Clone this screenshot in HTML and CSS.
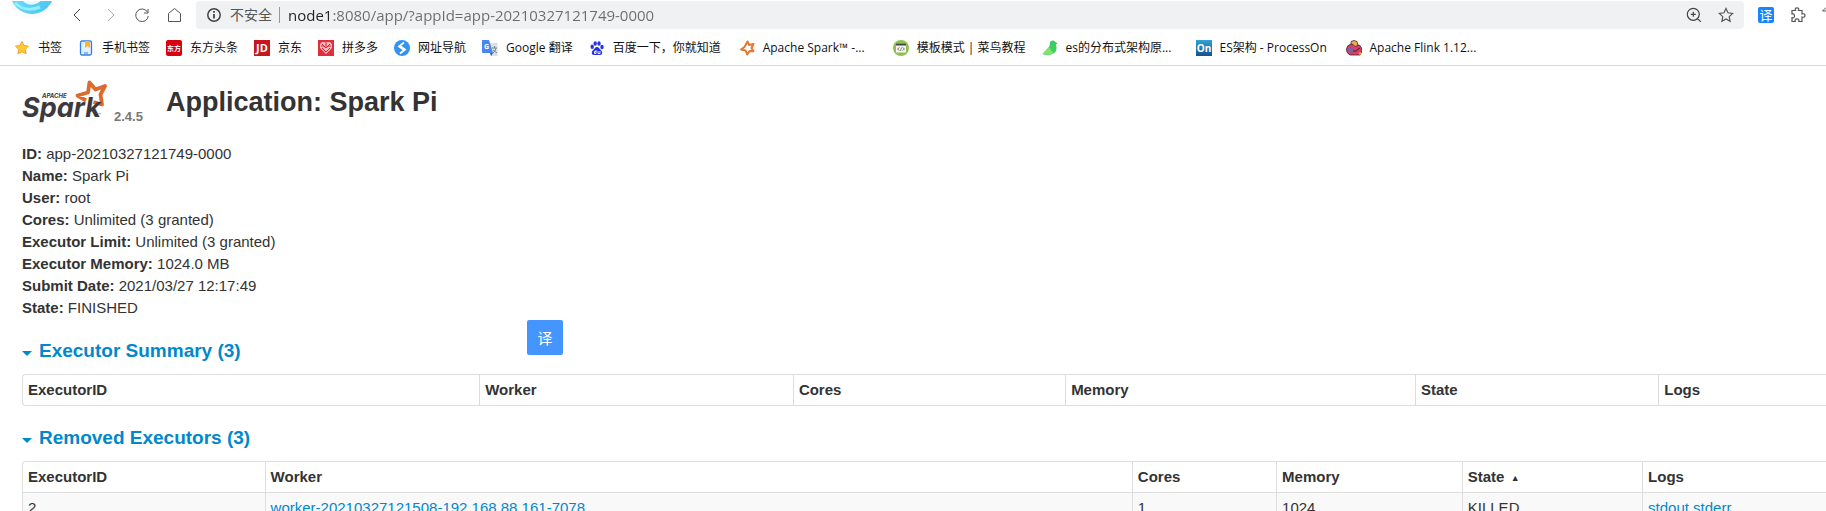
FILE: index.html
```html
<!DOCTYPE html>
<html lang="zh-CN">
<head>
<meta charset="utf-8">
<title>Application: Spark Pi</title>
<link rel="stylesheet" href="styles.css">
</head>
<body>
<header class="browser">
  <div class="toolbar">
    <svg class="avatar" width="54" height="28" viewBox="0 0 54 28" aria-hidden="true">
      <defs><linearGradient id="ring" x1="0" y1="0" x2="1" y2="1"><stop offset="0" stop-color="#8be6fb"/><stop offset="1" stop-color="#43c3f3"/></linearGradient></defs>
      <circle cx="32" cy="-9" r="27" fill="#fbfbfb"/>
      <circle cx="32" cy="-9" r="22" fill="url(#ring)"/>
      <path d="M22 -1 Q31 9 43 -2 L43 -6 L22 -6Z" fill="#e9faff"/>
      <path d="M15 2 Q26 12 40 6" fill="none" stroke="#8ff0ff" stroke-width="3"/>
    </svg>
    <button class="tool" aria-label="后退"><svg width="16" height="16" viewBox="0 0 16 16"><path d="M10 2 4 8l6 6" stroke="#444"/></svg></button>
    <button class="tool" aria-label="前进"><svg width="16" height="16" viewBox="0 0 16 16"><path d="m6 2 6 6-6 6" stroke="#aaa"/></svg></button>
    <button class="tool" aria-label="刷新"><svg width="16" height="16" viewBox="0 0 16 16"><path d="M13.600 5.300A6.300 6.300 0 1 0 14.300 9M14 2v4h-4" stroke="#555"/></svg></button>
    <button class="tool" aria-label="主页"><svg width="16" height="16" viewBox="0 0 16 16"><path d="M2.500 6.500 8.500 1.500l6 5v8h-12z" stroke="#555"/></svg></button>
    <div class="address">
      <svg width="16" height="16" viewBox="0 0 16 16" aria-hidden="true"><circle cx="8" cy="8" r="6.200" stroke="#444" stroke-width="1.500"/><path d="M8 7v4.500M8 4v1.800" stroke="#444" stroke-width="1.800"/></svg>
      <label class="insecure" for="url">不安全</label>
      <input class="url" id="url" type="text" value="node1:8080/app/?appId=app-20210327121749-0000">
      <button class="tool" aria-label="缩放"><svg width="16" height="16" viewBox="0 0 16 16"><path d="M13.300 7.300a6 6 0 1 1-12 0 6 6 0 0 1 12 0zM11.600 11.600l3.200 3.200M7.300 4.800v5M4.800 7.300h5" stroke="#444" stroke-width="1.200"/></svg></button>
      <button class="tool" aria-label="收藏"><svg width="16" height="16" viewBox="0 0 16 16"><path d="m8 1.500 2 4.300 4.700.6-3.500 3.200.9 4.700L8 12l-4.100 2.300.9-4.700L1.300 6.400 6 5.800z" stroke="#555" stroke-width="1.200"/></svg></button>
    </div>
    <div class="extensions">
      <button class="translate-ext">译</button>
      <button class="tool" aria-label="扩展"><svg width="16" height="16" viewBox="0 0 16 16"><path d="M2 3.500h3.500c-.7-2 .2-2.700 1.500-2.700s2.200.7 1.500 2.700H12V7c2-.7 3 .1 3 1.500s-1 2.200-3 1.500v4.500H8.800c.5-2-.5-2.700-1.800-2.700s-2.300.7-1.800 2.700H2v-3.800c2 .4 2.500-.6 2.500-1.700S4 6.500 2 7z" stroke="#555" stroke-width="1.200"/></svg></button>
      <svg class="edge" width="4" height="16" viewBox="0 0 4 16" aria-hidden="true"><path d="M4 .5 .5 4H4" stroke="#555"/></svg>
    </div>
  </div>
  <nav class="bookmarks" aria-label="书签">
    <a href="#"><svg width="16" height="16" viewBox="0 0 16 16"><path d="m8 1.500 2 4 4.500.7-3.200 3.100.8 4.500L8 11.800l-4.100 2 .8-4.500L1.500 6.200 6 5.500z" fill="#ffc933" stroke="#f5a623" stroke-linejoin="round"/></svg>书签</a>
    <a href="#"><svg width="16" height="16" viewBox="0 0 16 16"><rect x="2.500" y="1" width="11" height="14" rx="1.500" fill="#e3f0ff" stroke="#2f80ed" stroke-width="1.300"/><path d="M7 1h5v7L9.500 6 7 8z" fill="#ffb32c"/><path d="M6 13h4" stroke="#2f80ed"/></svg>手机书签</a>
    <a href="#"><svg width="16" height="16" viewBox="0 0 16 16"><rect width="16" height="16" rx="2" fill="#d8000c"/><text class="mark-cjk" x="8" y="11" text-anchor="middle">东方</text></svg>东方头条</a>
    <a href="#"><svg width="16" height="16" viewBox="0 0 16 16"><rect width="16" height="16" fill="#c9151e"/><text class="mark-jd" x="8" y="12" text-anchor="middle">JD</text></svg>京东</a>
    <a href="#"><svg width="16" height="16" viewBox="0 0 16 16"><rect width="16" height="16" fill="#e02e3a"/><path d="M8 14 2 8V4l2-2h3l1 1 1-1h3l2 2v4z" fill="#f7b5b8"/><path d="m4 4 4 4 4-4M4 8l4 4 4-4M8 3v4M3 6h3M10 6h3" stroke="#d52735"/></svg>拼多多</a>
    <a href="#"><svg width="16" height="16" viewBox="0 0 16 16"><circle cx="8" cy="8" r="8" fill="#3393f3"/><path d="M10 2.500 5 6.500l5 3.500M6 13.500l5-4L6 6" stroke="#fff" stroke-width="1.800"/></svg>网址导航</a>
    <a href="#"><svg width="16" height="16" viewBox="0 0 16 16"><path d="M6 3h9.500v13H9z" fill="#dcdfe3"/><path d="M0 0h7l4 13H1q-1 0-1-1z" fill="#4a86ec"/><path d="m8 13 3 0-2 3z" fill="#2a56c6"/><path d="M10 8h5M12.500 6v2M14 8q-1 4-3 5M11 10l4 3" stroke="#78838c"/><text class="mark-g" x="2" y="9">G</text></svg>Google 翻译</a>
    <a class="wide" href="#"><svg width="16" height="16" viewBox="0 0 16 16"><g fill="#2932e1"><ellipse cx="3.200" cy="6.800" rx="1.700" ry="2.200"/><ellipse cx="6.200" cy="3.500" rx="1.700" ry="2.300"/><ellipse cx="10" cy="3.500" rx="1.700" ry="2.300"/><ellipse cx="13" cy="7" rx="1.700" ry="2.200"/><path d="M8 7c2 0 2.500 2 4 3.300s2 4.700-1 4.700H5c-3 0-2.500-3.500-1-4.700S6 7 8 7z"/></g><path d="M7 10v3.500H5.500v-2H7M9 11v2.500h2V11" stroke="#fff" stroke-width=".9"/></svg>百度一下，你就知道</a>
    <a class="capped" href="#"><svg width="16" height="16" viewBox="0 0 16 16"><path d="m8.500 1.500 1.700 3.500 4.300-1-2 4 2 3.300-4-.3-2.300 3.500-1.500-4-4.700-1L5.500 7z" stroke="#e8762c" stroke-width="2" stroke-linejoin="round"/></svg>Apache Spark™ -...</a>
    <a href="#"><svg width="16" height="16" viewBox="0 0 16 16"><circle cx="8" cy="8" r="8" fill="#8cc152"/><rect x="3" y="3.500" width="10" height="9" fill="#f5f5f0"/><path d="M3 4.500h10" stroke="#444" stroke-width="2"/><path d="m6.500 7.500-2 1.500 2 1.500M9.500 7.500l2 1.500-2 1.500M8.500 7.500l-1 3.500" stroke="#666" stroke-width=".8"/></svg>模板模式 | 菜鸟教程</a>
    <a class="capped" href="#"><svg width="16" height="16" viewBox="0 0 16 16"><path d="M8 2q3-2.500 5-.5l2.500 2-1.500 1q2 7-3.500 9.500Q5 16 .5 14L7 7q1-1 1-5z" fill="#3ecb63"/><path d="M.5 14 7 7q2 4 5 6-5 3-11.500 1z" fill="#7ee36b"/></svg>es的分布式架构原...</a>
    <a class="wide" href="#"><svg width="16" height="16" viewBox="0 0 16 16"><defs><linearGradient id="on" x2="0" y2="1"><stop stop-color="#2fa4d0"/><stop offset="1" stop-color="#14518f"/></linearGradient></defs><rect width="16" height="16" fill="url(#on)"/><text class="mark-on" x="8" y="12" text-anchor="middle">On</text></svg>ES架构 - ProcessOn</a>
    <a class="capped" href="#"><svg width="16" height="16" viewBox="0 0 16 16"><path d="M5 4q-4 1-4.500 5Q0 13 4 15h10l1.500-3V8Q14 4 11 5z" fill="#dd3f62" stroke="#3d2432" stroke-width=".8"/><path d="M5 4V1.500L8 .5l3 1 1 4-3 1q-2-3-4-2.500z" fill="#e9ae57" stroke="#4b302a" stroke-width=".8"/><path d="M2 8q3-3 5 0t-1 5q-5 0-4-5z" fill="#8c5aa0"/><path d="M7 11q4 1 5-2l2-1" stroke="#3d2432"/><circle cx="14" cy="13.500" r="1.300" fill="#f1a13a"/></svg>Apache Flink 1.12...</a>
  </nav>
</header>

<main class="page">
  <div class="title-row">
    <a class="brand" href="#" aria-label="Apache Spark 2.4.5">
      <svg width="86" height="44" viewBox="0 0 86 44">
        <path d="M64 20.500 55.500 15.500 66 12.500 67.500 2.500 73.500 9.500 83 6 78.500 14.500 80 24.500 71.500 22" fill="none" stroke="#dc6a2e" stroke-width="3.800" stroke-linejoin="round"/>
        <text class="logo-small" x="20" y="18">APACHE</text>
        <text class="logo-word" x="0" y="37">Spark</text>
        <text class="logo-tm" x="76" y="37">™</text>
      </svg>
      <span class="version">2.4.5</span>
    </a>
    <h1>Application: Spark Pi</h1>
  </div>

  <ul class="details">
    <li><strong>ID:</strong> app-20210327121749-0000</li>
    <li><strong>Name:</strong> Spark Pi</li>
    <li><strong>User:</strong> root</li>
    <li><strong>Cores:</strong> Unlimited (3 granted)</li>
    <li><strong>Executor Limit:</strong> Unlimited (3 granted)</li>
    <li><strong>Executor Memory:</strong> 1024.0 MB</li>
    <li><strong>Submit Date:</strong> 2021/03/27 12:17:49</li>
    <li><strong>State:</strong> FINISHED</li>
  </ul>

  <section class="executors">
    <h2><a href="#"><span class="caret"></span>Executor Summary (3)</a></h2>
    <table class="summary">
      <thead><tr><th>ExecutorID</th><th>Worker</th><th>Cores</th><th>Memory</th><th>State</th><th>Logs</th></tr></thead>
    </table>
  </section>

  <section class="executors">
    <h2><a href="#"><span class="caret"></span>Removed Executors (3)</a></h2>
    <table class="removed">
      <thead><tr><th>ExecutorID</th><th>Worker</th><th>Cores</th><th>Memory</th><th>State <span class="sort">▲</span></th><th>Logs</th></tr></thead>
      <tbody><tr><td>2</td><td><a href="#">worker-20210327121508-192.168.88.161-7078</a></td><td>1</td><td>1024</td><td>KILLED</td><td><a href="#">stdout</a> <a href="#">stderr</a></td></tr></tbody>
    </table>
  </section>
</main>
<button class="translate-pop">译</button>
</body>
</html>
```
FILE: styles.css
```css
* { box-sizing: border-box; }

html { overflow: hidden; }

body {
  margin: 0;
  height: 100vh;
  overflow: hidden;
  background: #fff;
  color: #333;
  font: 15px/22px "Liberation Sans", Arial, sans-serif;
}

a { color: #0088cc; text-decoration: none; }

button {
  padding: 0;
  border: 0;
  background: none;
  font: inherit;
}

svg { display: block; flex: none; }

/* Browser chrome */
.browser {
  border-bottom: 1px solid #d9d9d9;
  font-family: "Open Sans", "Noto Sans CJK SC", sans-serif;
}

.toolbar {
  display: flex;
  align-items: center;
  gap: 16px;
  height: 29px;
}

.tool svg,
.address > svg,
.edge { fill: none; }

.address {
  flex: 1;
  display: flex;
  align-items: center;
  gap: 8px;
  height: 28px;
  margin: 1px -2px 0;
  padding: 0 10px;
  border-radius: 4px;
  background: #f0f1f3;
}

.address .tool + .tool { margin-left: 8px; }

.insecure {
  padding-right: 7px;
  border-right: 1px solid #999;
  color: #555;
  font-size: 14px;
  line-height: 16px;
}

.url {
  flex: 1;
  min-width: 0;
  padding: 0;
  border: 0;
  outline: 0;
  background: linear-gradient(to right, #222 44px, #6b6b6b 44px);
  background-clip: text;
  -webkit-background-clip: text;
  -webkit-text-fill-color: transparent;
  font: 15px/20px "Open Sans", sans-serif;
}

.extensions {
  display: flex;
  align-items: center;
  gap: 16px;
}

.translate-ext {
  width: 16px;
  height: 16px;
  border-radius: 2px;
  background: #1684fc;
  color: #fff;
  font-size: 13px;
  line-height: 16px;
}

.bookmarks {
  display: flex;
  align-items: center;
  gap: 16px;
  height: 36px;
  padding: 1px 0 0 14px;
}

.bookmarks a {
  display: flex;
  align-items: center;
  gap: 8px;
  color: #111;
  font-size: 12px;
  white-space: nowrap;
}

.bookmarks .wide { min-width: 134px; }

/* Shortened titles take the widest button size */
.bookmarks .capped { min-width: 138px; }

.bookmarks svg { fill: none; }

.mark-cjk { fill: #fff; font: bold 7px "Noto Sans CJK SC", sans-serif; }
.mark-jd { fill: #fff; font: bold 11px "Open Sans", sans-serif; }
.mark-g { fill: #fff; font: bold 7px "Open Sans", sans-serif; }
.mark-on { fill: #fff; font: bold 10px "Open Sans", sans-serif; }

/* Spark page */
.page { padding: 13px 0 0 22px; }

.title-row {
  display: flex;
  align-items: center;
  gap: 23px;
  height: 46px;
}

.brand {
  display: flex;
  align-items: flex-end;
  gap: 6px;
}

.logo-word { fill: #3c3a3e; font: italic bold 27px Inter, sans-serif; }
.logo-small { fill: #3c3a3e; font: italic bold 6px Inter, sans-serif; }
.logo-tm { fill: #777; font: 5px Inter, sans-serif; }

.version {
  color: #777;
  font-size: 13px;
  font-weight: bold;
  line-height: 14px;
}

h1 {
  margin: 0;
  font-size: 27px;
  line-height: 44px;
}

.details {
  margin: 18px 0 21px;
  padding: 0;
  list-style: none;
}

.executors + .executors { margin-top: 21px; }

h2 {
  margin: 0 0 12px;
  font-size: 19px;
  line-height: 22px;
}

h2 a {
  display: flex;
  align-items: center;
  gap: 7px;
}

.caret {
  margin-top: 4px;
  border: 5px solid transparent;
  border-top-color: currentColor;
  border-bottom: 0;
}

table {
  width: 100%;
  table-layout: fixed;
  border: 1px solid #ddd;
  border-right: 0;
  border-spacing: 0;
  border-top-left-radius: 4px;
}

.summary { border-bottom-left-radius: 4px; }

th, td {
  padding: 4px 5px;
  border-left: 1px solid #ddd;
  text-align: left;
}

th:first-child, td:first-child { border-left: 0; }

td {
  border-top: 1px solid #ddd;
  background: #f9f9f9;
}

.summary th:nth-child(1) { width: 25.3%; }
.summary th:nth-child(2) { width: 17.4%; }
.summary th:nth-child(3) { width: 15.1%; }
.summary th:nth-child(4) { width: 19.4%; }
.summary th:nth-child(5) { width: 13.5%; }

.removed th:nth-child(1) { width: 13.4%; }
.removed th:nth-child(2) { width: 48.1%; }
.removed th:nth-child(3) { width: 8%; }
.removed th:nth-child(4) { width: 10.3%; }
.removed th:nth-child(5) { width: 10%; }

.sort { margin-left: 2px; font-size: 9px; line-height: 9px; vertical-align: 1px; }

/* Floats over the page next to the selection */
.translate-pop {
  position: absolute;
  left: 527px;
  top: 320px;
  width: 36px;
  height: 35px;
  border-radius: 2px;
  background: #4595ff;
  color: #fff;
  font-family: "Noto Sans CJK SC", sans-serif;
}
```
